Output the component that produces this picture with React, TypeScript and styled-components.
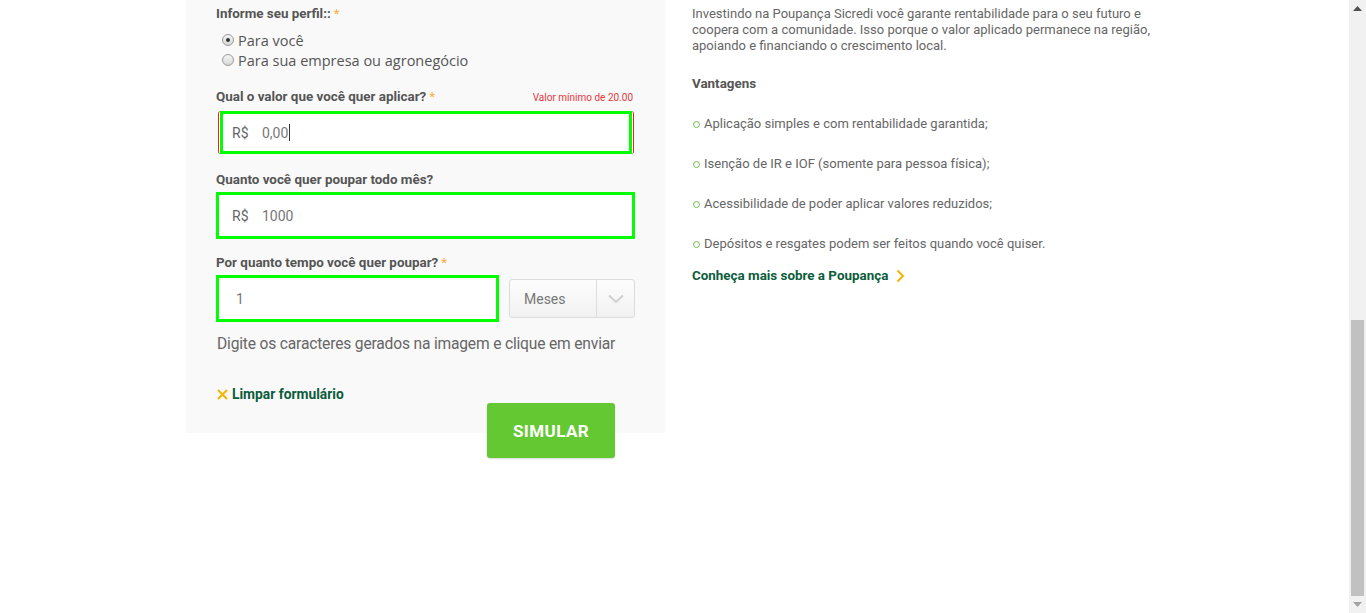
import React from "react";
import styled, { createGlobalStyle } from "styled-components";

const GlobalStyle = createGlobalStyle`
  html, body { margin: 0; padding: 0; background: #fff; overflow: hidden; }
  body { font-family: Roboto, "Noto Sans", sans-serif; color: #666; }
  * { box-sizing: border-box; }
`;

const AppFrame = styled.div`
  display: flex;
  height: 100vh;
`;

const Content = styled.div`
  flex: 1;
  min-width: 0;
  overflow: hidden;
`;

const ScrollRail = styled.div`
  width: 17px;
  flex: none;
  background: #f1f1f1;
  display: flex;
  flex-direction: column;
`;

const ScrollArrow = styled.div<{ $down?: boolean }>`
  height: 17px;
  display: flex;
  align-items: center;
  justify-content: center;
`;

const ScrollTrack = styled.div`
  flex: 1;
  display: flex;
  flex-direction: column;
  justify-content: flex-end;
  padding: 0 2px;
`;

const ScrollThumb = styled.div`
  height: 276px;
  background: #c1c1c1;
`;

const Columns = styled.main`
  width: 977px;
  margin: 0 auto;
  display: flex;
  align-items: flex-start;
  gap: 27px;
`;

const FormPanel = styled.section`
  width: 479px;
  flex: none;
  background: #f9f9f9;
  padding: 6px 30px 0 30px;
  display: flex;
  flex-direction: column;
`;

const Label = styled.div<{ $mt?: number }>`
  font-size: 13.4px;
  line-height: 16px;
  font-weight: 700;
  color: #555;
  margin-top: ${(p) => p.$mt ?? 0}px;
`;

const Star = styled.span`
  color: #fbb040;
  font-weight: 400;
  margin-left: 3px;
`;

const LabelRow = styled.div<{ $mt: number }>`
  display: flex;
  justify-content: space-between;
  align-items: center;
  margin-top: ${(p) => p.$mt}px;
`;

const ErrorHint = styled.span`
  font-size: 10px;
  color: #e8373b;
  margin-right: 2px;
`;

const RadioGroup = styled.div`
  margin-top: 8px;
  display: flex;
  flex-direction: column;
  padding-left: 6px;
`;

const RadioRow = styled.label`
  height: 20px;
  display: flex;
  align-items: center;
  gap: 4px;
  font-family: "Open Sans", sans-serif;
  font-size: 14.5px;
  color: #555;
`;

const RadioDot = styled.span<{ $checked?: boolean }>`
  width: 12px;
  height: 12px;
  border-radius: 50%;
  border: 1px solid #9a9a9a;
  background: linear-gradient(#f4f4f4, #d8d8d8);
  display: flex;
  align-items: center;
  justify-content: center;
  &::after {
    content: "";
    width: 4px;
    height: 4px;
    border-radius: 50%;
    background: ${(p) => (p.$checked ? "#333" : "transparent")};
  }
`;

const ErrorWrap = styled.div`
  margin-top: 6px;
  margin-left: 2px;
  margin-right: 1px;
  border-left: 1px solid #e0242a;
  border-right: 1px solid #e0242a;
  border-radius: 3px;
  padding: 0 1px;
`;

const Field = styled.div<{ $h?: number; $w?: number; $pl?: number; $mt?: number }>`
  display: flex;
  align-items: center;
  height: ${(p) => p.$h ?? 47}px;
  width: ${(p) => (p.$w ? `${p.$w}px` : "auto")};
  margin-top: ${(p) => p.$mt ?? 0}px;
  border: 3px solid #00ff00;
  background: #fff;
  padding-left: ${(p) => p.$pl ?? 13}px;
  font-size: 14px;
  color: #777;
`;

const Prefix = styled.span`
  width: 30px;
  color: #666;
`;

const Caret = styled.span`
  display: inline-block;
  width: 1px;
  height: 17px;
  background: #333;
  margin-left: 1px;
`;

const TimeRow = styled.div`
  margin-top: 4px;
  display: flex;
  align-items: center;
  gap: 10px;
`;

const Select = styled.div`
  width: 126px;
  height: 39px;
  border: 1px solid #dcdcdc;
  border-radius: 3px;
  background: linear-gradient(#fdfdfd, #f1f1f1);
  display: flex;
  align-items: stretch;
  font-size: 14px;
  color: #777;
`;

const SelectText = styled.span`
  width: 87px;
  padding-left: 14px;
  display: flex;
  align-items: center;
  border-right: 1px solid #dedede;
`;

const SelectArrow = styled.span`
  flex: 1;
  display: flex;
  align-items: center;
  justify-content: center;
`;

const Hint = styled.p`
  margin: 12px 0 0 1px;
  font-size: 15.6px;
  letter-spacing: -0.18px;
  line-height: 20px;
  color: #666;
  white-space: nowrap;
`;

const ClearLink = styled.a`
  margin-top: 32px;
  display: flex;
  align-items: center;
  gap: 4px;
  font-size: 13.8px;
  line-height: 16px;
  font-weight: 700;
  color: #0b5c3b;
  text-decoration: none;
  padding-left: 1px;
`;

const ButtonRow = styled.div`
  margin-top: 1px;
  margin-bottom: -25px;
  display: flex;
  justify-content: flex-end;
  padding-right: 20px;
`;

const SubmitButton = styled.button`
  width: 128px;
  height: 55px;
  border: none;
  border-radius: 3px;
  background: #64c832;
  color: #fff;
  font-family: Roboto, sans-serif;
  font-size: 17px;
  letter-spacing: 0.4px;
  font-weight: 700;
  text-transform: uppercase;
  box-shadow: 0 1px 2px rgba(0, 0, 0, 0.15);
  cursor: pointer;
`;

const InfoColumn = styled.aside`
  flex: 1;
  padding-top: 6px;
  display: flex;
  flex-direction: column;
`;

const Paragraph = styled.p`
  margin: 0;
  font-size: 13px;
  line-height: 16px;
  color: #666;
  padding-right: 10px;
`;

const InfoHeading = styled.h3`
  margin: 22px 0 0 0;
  font-size: 13.4px;
  line-height: 16px;
  font-weight: 700;
  color: #555;
`;

const BenefitList = styled.ul`
  list-style: none;
  margin: 24px 0 0 0;
  padding: 0;
  display: flex;
  flex-direction: column;
  gap: 24px;
`;

const BenefitItem = styled.li`
  display: flex;
  align-items: center;
  gap: 4px;
  font-size: 13px;
  line-height: 16px;
  color: #666;
  &::before {
    content: "";
    width: 5px;
    height: 5px;
    border-radius: 50%;
    border: 1px solid #6cc04a;
    margin-left: 1px;
  }
`;

const MoreLink = styled.a`
  margin-top: 16px;
  display: flex;
  align-items: center;
  gap: 8px;
  font-size: 13.4px;
  line-height: 16px;
  font-weight: 700;
  color: #0b5c3b;
  text-decoration: none;
`;

const benefits = [
  "Aplicação simples e com rentabilidade garantida;",
  "Isenção de IR e IOF (somente para pessoa física);",
  "Acessibilidade de poder aplicar valores reduzidos;",
  "Depósitos e resgates podem ser feitos quando você quiser.",
];

export default function App() {
  return (
    <AppFrame>
      <GlobalStyle />
      <Content>
        <Columns>
          <FormPanel>
            <Label>
              Informe seu perfil::<Star>*</Star>
            </Label>
            <RadioGroup>
              <RadioRow>
                <RadioDot $checked />
                Para você
              </RadioRow>
              <RadioRow>
                <RadioDot />
                Para sua empresa ou agronegócio
              </RadioRow>
            </RadioGroup>
            <LabelRow $mt={19}>
              <Label>
                Qual o valor que você quer aplicar?<Star>*</Star>
              </Label>
              <ErrorHint>Valor mínimo de 20.00</ErrorHint>
            </LabelRow>
            <ErrorWrap>
              <Field $h={43} $pl={9}>
                <Prefix>R$</Prefix>
                0,00
                <Caret />
              </Field>
            </ErrorWrap>
            <Label $mt={18}>Quanto você quer poupar todo mês?</Label>
            <Field $mt={4}>
              <Prefix>R$</Prefix>
              1000
            </Field>
            <Label $mt={16}>
              Por quanto tempo você quer poupar?<Star>*</Star>
            </Label>
            <TimeRow>
              <Field $w={283} $pl={17}>
                1
              </Field>
              <Select>
                <SelectText>Meses</SelectText>
                <SelectArrow>
                  <svg width="16" height="10" viewBox="0 0 16 10">
                    <polyline points="1,1.5 8,8 15,1.5" fill="none" stroke="#cfcfcf" strokeWidth="2" />
                  </svg>
                </SelectArrow>
              </Select>
            </TimeRow>
            <Hint>Digite os caracteres gerados na imagem e clique em enviar</Hint>
            <ClearLink href="#">
              <svg width="11" height="11" viewBox="0 0 11 11">
                <path d="M1 1 L10 10 M10 1 L1 10" stroke="#f5b400" strokeWidth="2" />
              </svg>
              Limpar formulário
            </ClearLink>
            <ButtonRow>
              <SubmitButton type="button">Simular</SubmitButton>
            </ButtonRow>
          </FormPanel>
          <InfoColumn>
            <Paragraph>
              Investindo na Poupança Sicredi você garante rentabilidade para o seu futuro e coopera com
              a comunidade. Isso porque o valor aplicado permanece na região, apoiando e financiando o
              crescimento local.
            </Paragraph>
            <InfoHeading>Vantagens</InfoHeading>
            <BenefitList>
              {benefits.map((b) => (
                <BenefitItem key={b}>{b}</BenefitItem>
              ))}
            </BenefitList>
            <MoreLink href="#">
              Conheça mais sobre a Poupança
              <svg width="9" height="14" viewBox="0 0 9 14">
                <polyline points="1.5,1.5 7,7 1.5,12.5" fill="none" stroke="#f5b400" strokeWidth="2" />
              </svg>
            </MoreLink>
          </InfoColumn>
        </Columns>
      </Content>
      <ScrollRail>
        <ScrollArrow>
          <svg width="9" height="5" viewBox="0 0 9 5">
            <polygon points="0,5 4.5,0 9,5" fill="#505050" />
          </svg>
        </ScrollArrow>
        <ScrollTrack>
          <ScrollThumb />
        </ScrollTrack>
        <ScrollArrow $down>
          <svg width="9" height="5" viewBox="0 0 9 5">
            <polygon points="0,0 4.5,5 9,0" fill="#a3a3a3" />
          </svg>
        </ScrollArrow>
      </ScrollRail>
    </AppFrame>
  );
}
